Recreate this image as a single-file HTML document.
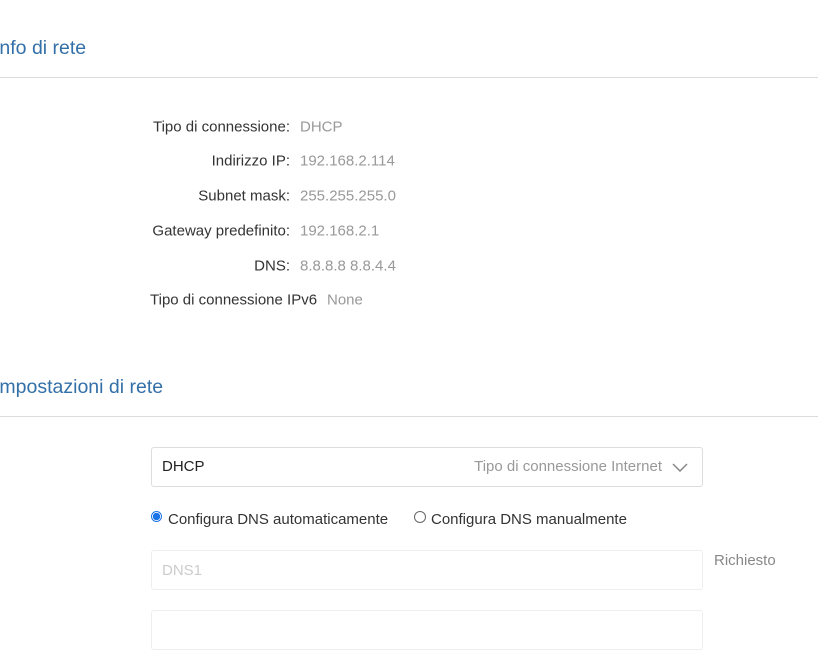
<!DOCTYPE html><html><head><style>
body{margin:0;width:818px;height:618px;overflow:hidden;background:#fff;font-family:"Liberation Sans","Noto Sans CJK SC",sans-serif;position:relative;color:#333}
.a{position:absolute;white-space:nowrap}
.h{font-size:19.5px;color:#3370a8;left:-6px}
.line{position:absolute;left:0;width:818px;height:1px;background:#dcdcdc}
.l{font-size:15px;color:#333;text-align:right;right:528px;transform:translateY(-50%)}
.v{font-size:15px;color:#999;left:300px;transform:translateY(-50%)}
.box{position:absolute;left:151px;width:550px;height:38px;border:1px solid #ddd;border-radius:3px;box-sizing:content-box}
</style></head><body>
<div class="a h" style="top:37px">Info di rete</div>
<div class="line" style="top:77px"></div>
<div class="a l" style="top:127px">Tipo di connessione:</div><div class="a v" style="top:127px">DHCP</div>
<div class="a l" style="top:161px">Indirizzo IP:</div><div class="a v" style="top:161px">192.168.2.114</div>
<div class="a l" style="top:196px">Subnet mask:</div><div class="a v" style="top:196px">255.255.255.0</div>
<div class="a l" style="top:231px">Gateway predefinito:</div><div class="a v" style="top:231px">192.168.2.1</div>
<div class="a l" style="top:266px">DNS:</div><div class="a v" style="top:266px">8.8.8.8 8.8.4.4</div>
<div class="a" style="top:300px;left:150px;font-size:15px;transform:translateY(-50%)">Tipo di connessione IPv6</div><div class="a v" style="top:300px;left:327px">None</div>
<div class="a h" style="top:376px">Impostazioni di rete</div>
<div class="line" style="top:416px"></div>
<div class="box" style="top:447px"></div>
<div class="a" style="left:162px;top:458px;font-size:15px;color:#222">DHCP</div>
<div class="a" style="right:156px;top:458px;font-size:15px;color:#999">Tipo di connessione Internet</div>
<svg class="a" style="left:672px;top:462px" width="16" height="10"><path d="M1 2 L8 9 L15 2" fill="none" stroke="#888" stroke-width="1.5"/></svg>
<div class="a" style="left:151px;top:511px;width:11px;height:11px;border-radius:50%;border:1px solid #1a73e8;box-sizing:border-box;background:radial-gradient(#1a73e8 55%,#fff 60%)"></div>
<div class="a" style="left:168px;top:511px;font-size:15px;color:#333">Configura DNS automaticamente</div>
<div class="a" style="left:414px;top:511px;width:12px;height:12px;border-radius:50%;border:1px solid #666;box-sizing:border-box"></div>
<div class="a" style="left:431px;top:511px;font-size:15px;color:#333">Configura DNS manualmente</div>
<div class="box" style="top:550px;border-color:#eee"></div>
<div class="a" style="left:162px;top:562px;font-size:15px;color:#ccc">DNS1</div>
<div class="a" style="left:714px;top:552px;font-size:15px;color:#888">Richiesto</div>
<div class="box" style="top:610px;border-color:#eee"></div>
</body></html>
